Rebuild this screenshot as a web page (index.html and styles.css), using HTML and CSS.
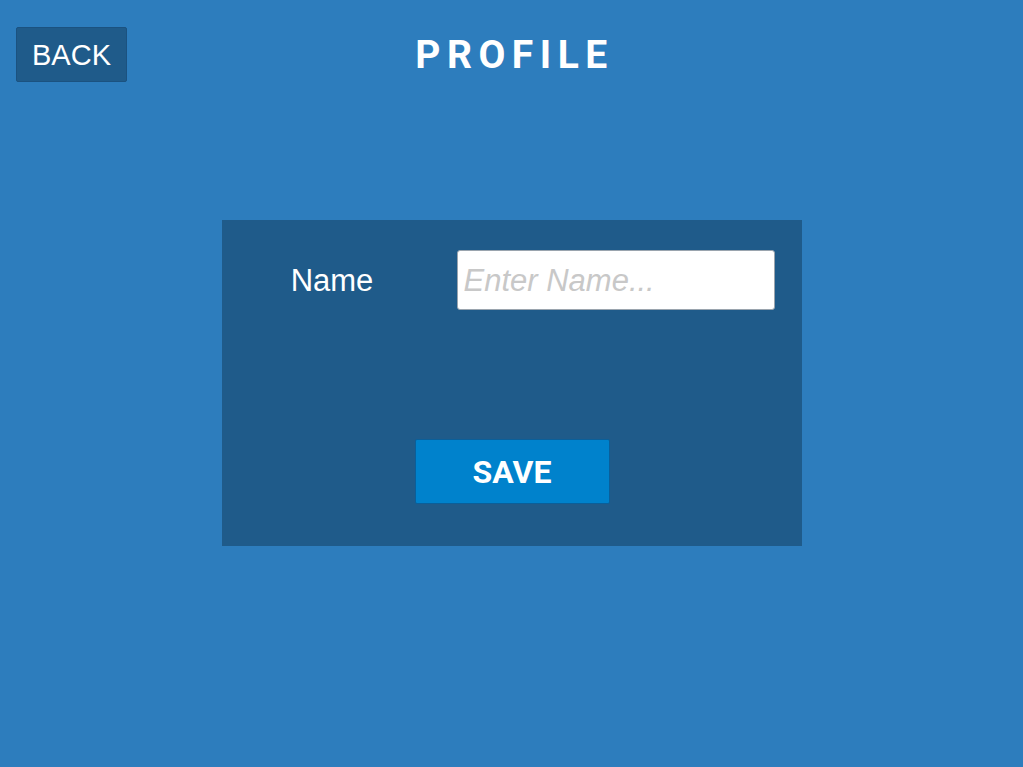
FILE: index.html
```html
<!DOCTYPE html>
<html lang="en">
<head>
    <meta charset="UTF-8">
    <meta name="viewport" content="width=device-width, initial-scale=1.0">
    <title>Profile</title>
    <link rel="stylesheet" href="styles.css">
</head>
<body>
    <div id="header">
        <button type="button" class="back-btn">BACK</button>
        <h1 class="title">PROFILE</h1>
        <div class="spacer"></div>
    </div>

    <div id="profile-panel">
        <form class="profile-form" onsubmit="return false">
            <div class="field-row">
                <label for="name" class="field-label">Name</label>
                <input type="text" id="name" name="name" placeholder="Enter Name...">
            </div>
            <button type="submit" class="save-btn">SAVE</button>
        </form>
    </div>
</body>
</html>
```

FILE: styles.css
```css
body {
    font-family: "Liberation Sans", Arial, sans-serif;
    color: white;
    background-color: #2d7dbd;
    margin: 0;
}
#header {
    display: grid;
    grid-template-columns: 111px 1fr 111px;
    align-items: center;
    padding: 27px 16px 0;
}
.back-btn {
    height: 55px;
    background-color: #1f5b8a;
    color: white;
    font-family: "Liberation Sans", Arial, sans-serif;
    font-size: 29px;
    border: 1px solid #1b5280;
    border-radius: 2px;
    padding: 1px 0 0;
    cursor: pointer;
}
.title {
    margin: 0;
    text-align: center;
    font-family: Roboto, sans-serif;
    font-weight: 700;
    font-size: 39px;
    letter-spacing: 6.5px;
    padding-left: 6px;
}
#profile-panel {
    width: 580px;
    height: 326px;
    box-sizing: border-box;
    margin: 138px auto 0;
    background-color: #1f5b8a;
    padding-top: 30px;
}
.profile-form {
    display: flex;
    flex-direction: column;
    align-items: center;
}
.field-row {
    display: flex;
    align-items: center;
    align-self: stretch;
}
.field-label {
    width: 221px;
    padding-top: 2px;
    text-align: center;
    font-size: 31px;
}
#name {
    width: 318px;
    height: 60px;
    box-sizing: border-box;
    margin-left: 14px;
    padding: 2px 6px 0;
    border: 1px solid #9aa4ae;
    border-radius: 3px;
    background: white;
    font-family: "Liberation Sans", Arial, sans-serif;
    font-size: 31px;
    color: #333;
}
#name::placeholder {
    color: #c8c8c8;
    font-style: italic;
}
.save-btn {
    margin-top: 129px;
    margin-left: 1px;
    width: 195px;
    height: 65px;
    background-color: #0082cc;
    color: white;
    border: 1px solid #0a5f9a;
    border-radius: 2px;
    font-family: Roboto, sans-serif;
    font-weight: 700;
    font-size: 32px;
    cursor: pointer;
}
```
